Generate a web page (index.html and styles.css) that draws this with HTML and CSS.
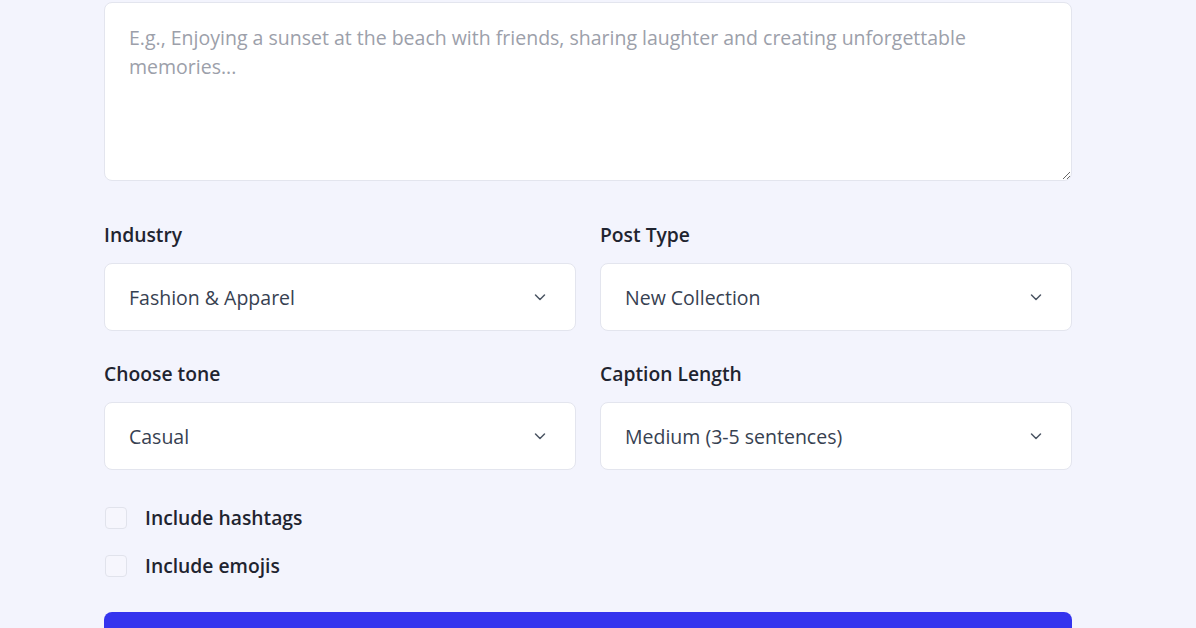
FILE: index.html
```html
<!DOCTYPE html>
<html lang="en">

<head>
    <meta charset="UTF-8">
    <meta name="viewport" content="width=device-width, initial-scale=1.0">
    <title>Caption Generator</title>
    <link rel="stylesheet" href="styles.css">
</head>

<body>
    <div class="caption-container">
        <form id="captionForm">
            <!-- Post Description -->
            <textarea id="description" class="description" placeholder="E.g., Enjoying a sunset at the beach with friends, sharing laughter and creating unforgettable memories..."></textarea>

            <!-- Industry / Post Type -->
            <div class="field-row">
                <div class="field">
                    <label for="industry">Industry</label>
                    <div class="select-wrap">
                        <select id="industry">
                            <option>Fashion &amp; Apparel</option>
                            <option>Food &amp; Beverage</option>
                            <option>Travel</option>
                        </select>
                        <svg class="chevron" viewBox="0 0 16 16" width="16" height="16"><path d="M3.5 6l4.5 4.5L12.5 6" /></svg>
                    </div>
                </div>
                <div class="field">
                    <label for="post-type">Post Type</label>
                    <div class="select-wrap">
                        <select id="post-type">
                            <option>New Collection</option>
                            <option>Sale</option>
                            <option>Behind the Scenes</option>
                        </select>
                        <svg class="chevron" viewBox="0 0 16 16" width="16" height="16"><path d="M3.5 6l4.5 4.5L12.5 6" /></svg>
                    </div>
                </div>
            </div>

            <!-- Tone / Length -->
            <div class="field-row">
                <div class="field">
                    <label for="tone">Choose tone</label>
                    <div class="select-wrap">
                        <select id="tone">
                            <option>Casual</option>
                            <option>Professional</option>
                            <option>Funny</option>
                        </select>
                        <svg class="chevron" viewBox="0 0 16 16" width="16" height="16"><path d="M3.5 6l4.5 4.5L12.5 6" /></svg>
                    </div>
                </div>
                <div class="field">
                    <label for="length">Caption Length</label>
                    <div class="select-wrap">
                        <select id="length">
                            <option>Medium (3-5 sentences)</option>
                            <option>Short (1-2 sentences)</option>
                            <option>Long (6+ sentences)</option>
                        </select>
                        <svg class="chevron" viewBox="0 0 16 16" width="16" height="16"><path d="M3.5 6l4.5 4.5L12.5 6" /></svg>
                    </div>
                </div>
            </div>

            <!-- Options -->
            <div class="options">
                <label class="check"><input type="checkbox" id="hashtags"> <span>Include hashtags</span></label>
                <label class="check"><input type="checkbox" id="emojis"> <span>Include emojis</span></label>
            </div>

            <button type="submit" class="generate-button">Generate Caption</button>
        </form>
    </div>
</body>

</html>
```

FILE: styles.css
```css
body {
    font-family: "Open Sans", "Noto Sans", Arial, sans-serif;
    margin: 0;
    padding: 0;
    background-color: #f3f4fd;
    color: #1f2937;
}

.caption-container {
    width: 968px;
    margin-left: 104px;
    padding-top: 2px;
}

form {
    display: flex;
    flex-direction: column;
}

.description {
    box-sizing: border-box;
    width: 100%;
    height: 179px;
    padding: 20px 24px;
    font-family: inherit;
    font-size: 19.5px;
    line-height: 29px;
    color: #374151;
    background-color: white;
    border: 1px solid #e3e5ee;
    border-radius: 8px;
    resize: vertical;
    outline: none;
}

.description::placeholder {
    color: #9ca0aa;
}

.field-row {
    display: grid;
    grid-template-columns: 1fr 1fr;
    gap: 24px;
    margin-top: 42px;
}

.field-row + .field-row {
    margin-top: 31px;
}

.field {
    display: flex;
    flex-direction: column;
    gap: 16px;
}

.field label {
    font-size: 19.3px;
    font-weight: 600;
    line-height: 24px;
    color: #1f2430;
}

.select-wrap {
    position: relative;
}

select {
    box-sizing: border-box;
    width: 100%;
    height: 68px;
    padding: 0 24px;
    font-family: inherit;
    font-size: 19.5px;
    color: #374151;
    background-color: white;
    border: 1px solid #e3e5ee;
    border-radius: 8px;
    appearance: none;
    outline: none;
}

.chevron {
    position: absolute;
    right: 28px;
    top: 26px;
    fill: none;
    stroke: #4b5563;
    stroke-width: 1.5;
    stroke-linecap: round;
    stroke-linejoin: round;
    pointer-events: none;
}

.options {
    display: flex;
    flex-direction: column;
    gap: 22px;
    margin-top: 35px;
}

.check {
    display: flex;
    align-items: center;
    gap: 18px;
    font-size: 19.3px;
    font-weight: 600;
    line-height: 26px;
    color: #1f2430;
}

.check input {
    appearance: none;
    box-sizing: border-box;
    width: 22px;
    height: 22px;
    margin: 0 0 0 1px;
    border: 1px solid #e1e3ec;
    border-radius: 4px;
    background-color: #f6f6fd;
}

.generate-button {
    margin-top: 33px;
    height: 76px;
    font-family: inherit;
    font-size: 18px;
    font-weight: 600;
    color: white;
    background-color: #3434ee;
    border: none;
    border-radius: 8px;
    cursor: pointer;
}
```
